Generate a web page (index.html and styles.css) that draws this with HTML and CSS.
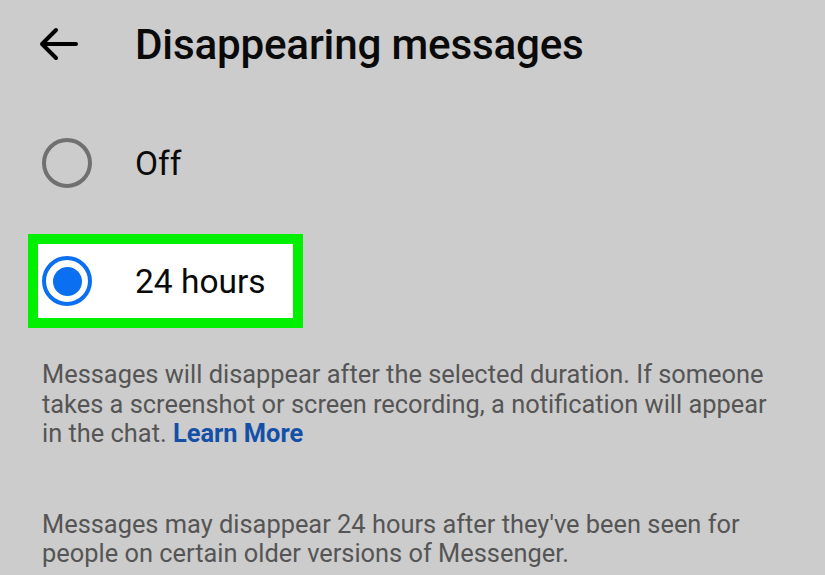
FILE: index.html
```html
<!DOCTYPE html>
<html lang="en">
<head>
  <meta charset="UTF-8">
  <title>Disappearing messages</title>
  <link rel="stylesheet" href="styles.css">
</head>
<body>

  <header>
    <button class="back-btn" aria-label="Back">
      <svg width="40" height="34" viewBox="0 0 40 34">
        <path d="M38 17 H4 M18 3 L4 17 L18 31" fill="none" stroke="#000" stroke-width="4" stroke-linecap="round" stroke-linejoin="round"/>
      </svg>
    </button>
    <h1>Disappearing messages</h1>
  </header>

  <main>
    <div class="option">
      <span class="radio"></span>
      <span class="option-label">Off</span>
    </div>

    <div class="option option-highlight">
      <span class="radio checked"></span>
      <span class="option-label">24 hours</span>
    </div>

    <p class="note note-first">
      Messages will disappear after the selected duration. If someone
      takes a screenshot or screen recording, a notification will appear
      in the chat. <a href="#">Learn More</a>
    </p>

    <p class="note note-second">
      Messages may disappear 24 hours after they've been seen for
      people on certain older versions of Messenger.
    </p>
  </main>

</body>
</html>
```

FILE: styles.css
```css
html, body {
  margin: 0;
  font-family: Roboto, 'Liberation Sans', sans-serif;
  background-color: #cccccc;
  color: #111;
  overflow: hidden;
}

header {
  display: flex;
  align-items: center;
  height: 88px;
  padding-left: 38px;
}

.back-btn {
  padding: 0;
  border: none;
  background: none;
  display: flex;
  cursor: pointer;
}

header h1 {
  margin: 0 0 0 57px;
  font-size: 42.2px;
  font-weight: 500;
  color: #0a0a0a;
  letter-spacing: -0.2px;
}

main {
  padding: 38px 42px 0 42px;
}

.option {
  display: flex;
  align-items: center;
  height: 74px;
}

.option-label {
  margin-left: 43px;
  font-size: 33.5px;
  color: #0a0a0a;
}

.radio {
  box-sizing: border-box;
  width: 50px;
  height: 50px;
  border-radius: 50%;
  border: 4px solid #707070;
  display: flex;
  align-items: center;
  justify-content: center;
}

.radio.checked {
  border: 4.5px solid #0a6ff0;
}

.radio.checked::after {
  content: "";
  width: 29px;
  height: 29px;
  border-radius: 50%;
  background-color: #0a6ff0;
}

.option-highlight {
  width: 251px;
  margin: 34px 0 0 -14px;
  padding-left: 4px;
  border: 10px solid #00f000;
  background-color: #fff;
}

.note {
  margin: 0;
  max-width: 740px;
  font-size: 25.4px;
  line-height: 29.5px;
  color: #555;
}

.note a {
  color: #1450a8;
  font-weight: bold;
  text-decoration: none;
}

.note-first {
  margin-top: 32px;
}

.note-second {
  margin-top: 61px;
}
```
